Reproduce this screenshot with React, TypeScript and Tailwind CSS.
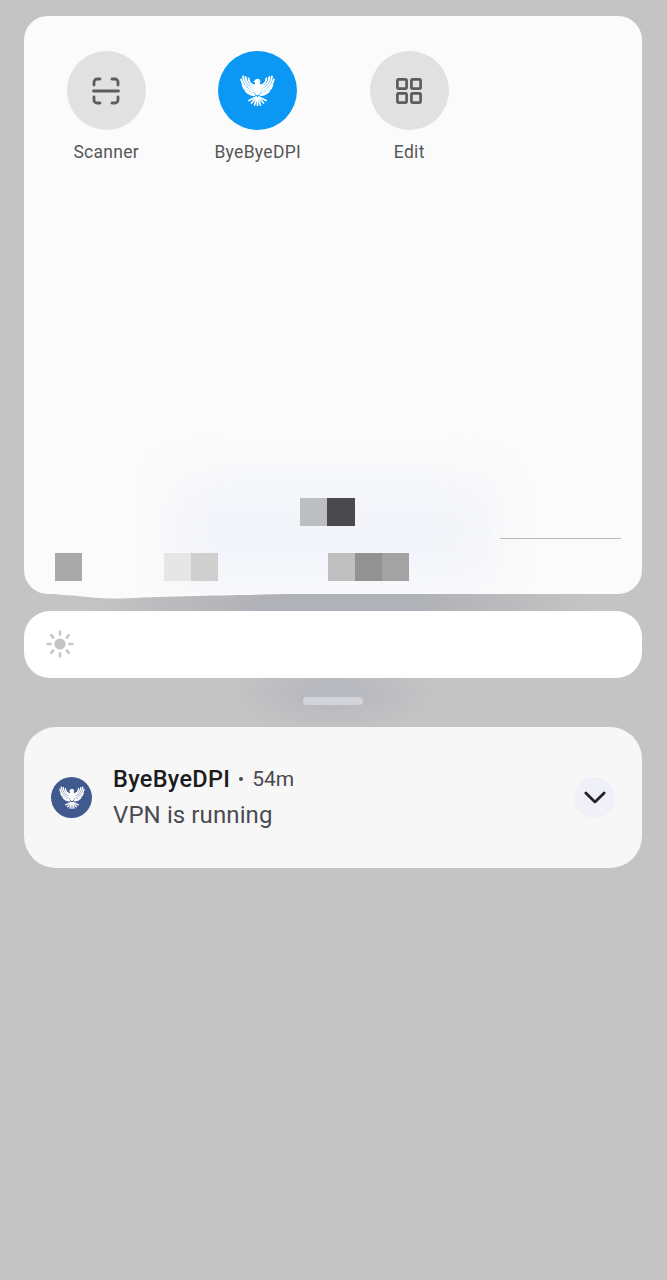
const font = { fontFamily: 'Roboto, "Noto Sans", sans-serif' };

function Eagle({ className, color = "#ffffff" }: { className?: string; color?: string }) {
  const wing = (
    <g fill="none" stroke={color} strokeLinecap="round" strokeWidth="1.9">
      <path d="M14 10.5C11 9.5 8.8 6.5 8.6 3.5" />
      <path d="M13.5 12.5C9.5 11 6 7 5.6 2" />
      <path d="M13 14.5C8.5 13.5 3.8 9 3 1.5" />
      <path d="M13 16.5C8 15.8 2.5 11 1.2 4.5" />
      <path d="M13.5 18.5C9 18.5 4 15 2.6 10" />
      <path d="M14.5 20C11 20.2 8 18.6 6 16.2" />
    </g>
  );
  return (
    <svg viewBox="0 0 35 31" className={className} aria-hidden="true">
      {wing}
      <g transform="matrix(-1 0 0 1 35 0)">{wing}</g>
      <circle cx="17.5" cy="6.5" r="2.8" fill={color} />
      <path d="M15 5.5l-2 1.3 2.5.8z" fill={color} />
      <path d="M17.5 6.5c3 1.5 4.4 4.5 4.2 8-.2 3-2.2 5.3-4.2 6-2-.7-4-3-4.2-6-.2-3.5 1.2-6.5 4.2-8z" fill={color} />
      <g stroke={color} strokeWidth="1.7" strokeLinecap="round">
        <path d="M16 22L9 25.5" />
        <path d="M16.5 22.5L11.5 28" />
        <path d="M17 23L14.5 30" />
        <path d="M17.5 23V31" />
        <path d="M18 23L20.5 30" />
        <path d="M18.5 22.5L23.5 28" />
        <path d="M19 22L26 25.5" />
      </g>
    </svg>
  );
}

function ScannerIcon() {
  return (
    <svg viewBox="0 0 28 28" className="h-[28px] w-[28px]" fill="none" stroke="#5c5c5c" strokeWidth="2.8" strokeLinecap="round" aria-hidden="true">
      <path d="M2 8V5a3 3 0 0 1 3-3h3" />
      <path d="M20 2h3a3 3 0 0 1 3 3v3" />
      <path d="M2 20v3a3 3 0 0 0 3 3h3" />
      <path d="M20 26h3a3 3 0 0 0 3-3v-3" />
      <path d="M1.5 14h25" />
    </svg>
  );
}

function EditIcon() {
  return (
    <svg viewBox="0 0 28 28" className="h-[28px] w-[28px]" fill="none" stroke="#5c5c5c" strokeWidth="2.7" aria-hidden="true">
      <rect x="2.4" y="2.4" width="9.2" height="9.2" rx="1.4" />
      <rect x="16.4" y="2.4" width="9.2" height="9.2" rx="1.4" />
      <rect x="2.4" y="16.4" width="9.2" height="9.2" rx="1.4" />
      <rect x="16.4" y="16.4" width="9.2" height="9.2" rx="1.4" />
    </svg>
  );
}

function SunIcon() {
  return (
    <svg viewBox="0 0 28 28" className="h-[28px] w-[28px]" fill="#c4c4c4" stroke="#c8c8c8" strokeWidth="2.6" strokeLinecap="round" aria-hidden="true">
      <circle cx="14" cy="14" r="5.6" stroke="none" />
      <path d="M14 1.6v3M14 23.4v3M1.6 14h3M23.4 14h3M5.2 5.2l2 2.4M20.8 20.4l2 2.4M22.8 5.2l-2 2.4M7.2 20.4l-2 2.4" fill="none" />
    </svg>
  );
}

function Tile({ label, active, children }: { label: string; active?: boolean; children: React.ReactNode }) {
  return (
    <div className="flex flex-col items-center">
      <div className={`flex h-[79px] w-[79px] items-center justify-center rounded-full ${active ? "bg-[#0b98f5]" : "bg-[#e1e1e1]"}`}>
        {children}
      </div>
      <span className="mt-[11px] text-[17.5px] leading-[22px] tracking-[0.3px] text-[#575757]">{label}</span>
    </div>
  );
}

export default function App() {
  return (
    <div className="relative h-[1280px] w-[667px] overflow-hidden bg-[#c4c4c4] pt-[16px] pl-[24px]" style={font}>
      <div className="absolute left-[90px] top-[560px] h-[90px] w-[500px] bg-[radial-gradient(ellipse_closest-side,#b1b2b7_35%,#c4c4c400_100%)]" />
      <div className="absolute left-[225px] top-[650px] h-[85px] w-[215px] bg-[radial-gradient(ellipse_closest-side,#babbc0_35%,#c4c4c400_100%)]" />
      <svg viewBox="0 0 240 8" className="absolute left-[45px] top-[591px] h-[8px] w-[240px]" aria-hidden="true">
        <path d="M0 0H240V3C200 4 120 5 75 7.5C60 8 40 6 28 4.5 15 4 5 3 0 0Z" fill="#fbfbfb" />
      </svg>

      <section className="relative flex h-[578px] w-[618px] flex-col overflow-hidden rounded-[24px] bg-[#fbfbfb]">
        <div className="absolute left-[150px] top-[465px] h-[100px] w-[320px] bg-[#f2f4fa] blur-[24px]" />
        <div className="relative grid grid-cols-[151.5px_151.5px_151.5px] pl-[6.5px] pt-[35px]">
          <Tile label="Scanner"><ScannerIcon /></Tile>
          <Tile label="ByeByeDPI" active><Eagle className="h-[31px] w-[35px]" /></Tile>
          <Tile label="Edit"><EditIcon /></Tile>
        </div>
        <div className="relative mt-auto pb-[13px]">
          <div className="flex pl-[276px]">
            <div className="h-[28px] w-[27px] bg-[#bdbec2]" />
            <div className="h-[28px] w-[28px] bg-[#4a4a4d]" />
          </div>
          <div className="h-[27px] pl-[476px] pt-[12px]">
            <div className="h-[1px] w-[121px] bg-[#b9b9b9]" />
          </div>
          <div className="flex pl-[31px]">
            <div className="h-[28px] w-[27px] bg-[#a9a9a9]" />
            <div className="ml-[82px] h-[28px] w-[27px] bg-[#e6e6e6]" />
            <div className="h-[28px] w-[27px] bg-[#cfcfcf]" />
            <div className="ml-[110px] h-[28px] w-[27px] bg-[#bfbfbf]" />
            <div className="h-[28px] w-[27px] bg-[#929292]" />
            <div className="h-[28px] w-[27px] bg-[#a3a3a3]" />
          </div>
        </div>
      </section>

      <section className="relative mt-[17px] flex h-[67px] w-[618px] items-center rounded-[26px] bg-white pb-[1px] pl-[22px]">
        <SunIcon />
      </section>

      <div className="relative mt-[19px] ml-[279px] h-[8px] w-[60px] rounded-full bg-[#d3d4d9]" />

      <section className="relative mt-[22px] flex h-[141px] w-[618px] items-center rounded-[32px] bg-[#f7f7f8] pl-[27px] pr-[27px]">
        <div className="flex h-[41px] w-[41px] shrink-0 items-center justify-center rounded-full bg-[#40598f]">
          <Eagle className="h-[23px] w-[26px]" />
        </div>
        <div className="ml-[21px] flex-1 pb-[2px]">
          <div className="flex items-center leading-[30px]">
            <span className="text-[23.5px] font-medium tracking-[0.3px] text-[#1c1c1e]">ByeByeDPI</span>
            <span className="ml-[9px] h-[4px] w-[4px] rounded-full bg-[#4a4a4f]" />
            <span className="ml-[9px] text-[21px] text-[#4a4a4f]">54m</span>
          </div>
          <div className="mt-[6px] text-[24px] leading-[30px] tracking-[0.1px] text-[#4a4a50]">VPN is running</div>
        </div>
        <div className="flex h-[41px] w-[41px] items-center justify-center rounded-full bg-[#f0f0f8]">
          <svg viewBox="0 0 24 14" className="h-[13px] w-[22px]" fill="none" stroke="#232326" strokeWidth="3" strokeLinecap="round" strokeLinejoin="round" aria-hidden="true">
            <path d="M2 2l10 10L22 2" />
          </svg>
        </div>
      </section>
    </div>
  );
}
